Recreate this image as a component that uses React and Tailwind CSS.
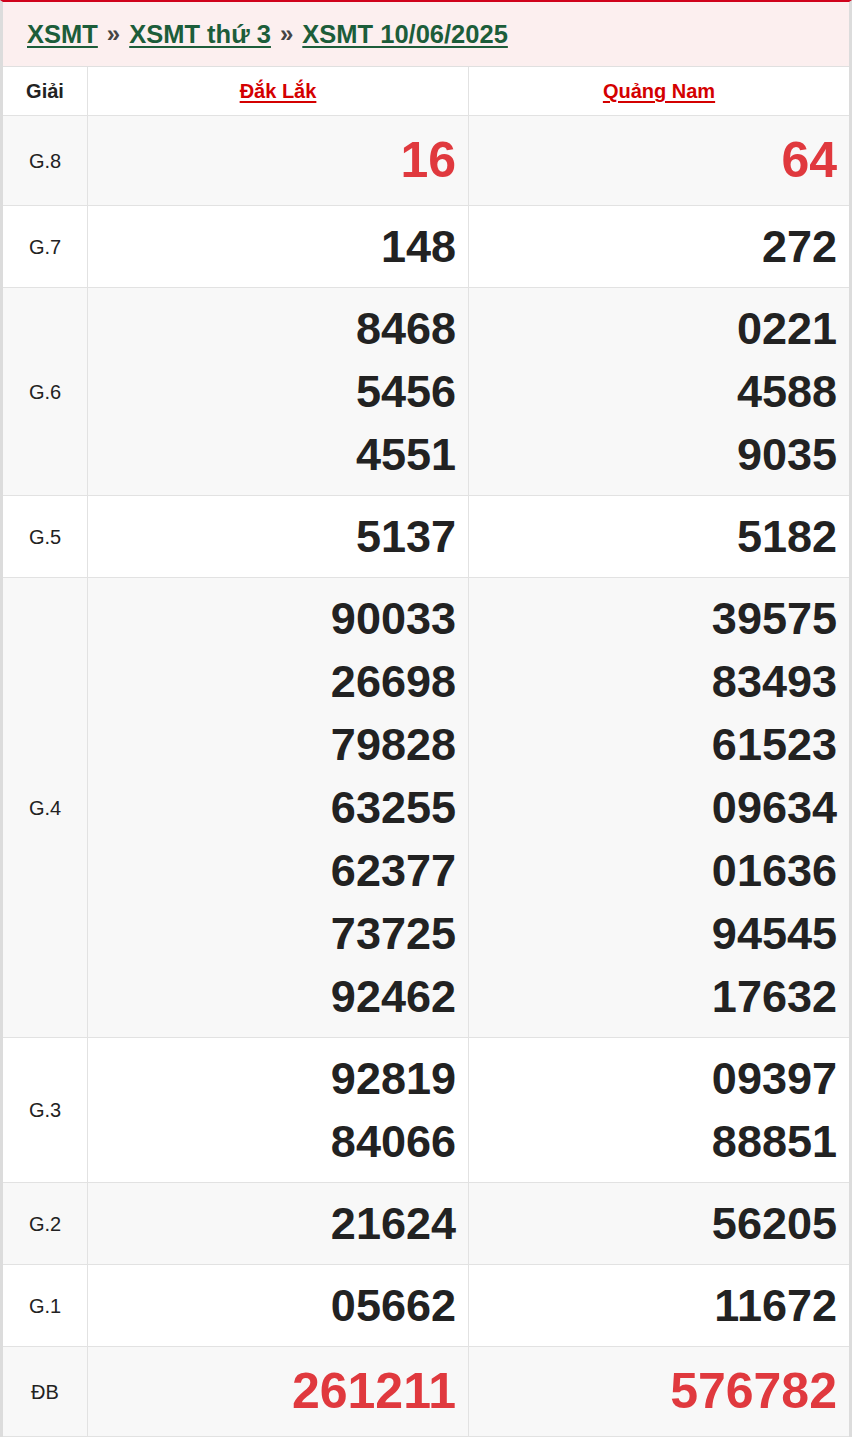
import React from "react";

const rows = [
  { label: "G.8", a: ["16"], b: ["64"], big: true, gray: true },
  { label: "G.7", a: ["148"], b: ["272"] },
  { label: "G.6", a: ["8468", "5456", "4551"], b: ["0221", "4588", "9035"], gray: true },
  { label: "G.5", a: ["5137"], b: ["5182"] },
  {
    label: "G.4",
    a: ["90033", "26698", "79828", "63255", "62377", "73725", "92462"],
    b: ["39575", "83493", "61523", "09634", "01636", "94545", "17632"],
    gray: true,
  },
  { label: "G.3", a: ["92819", "84066"], b: ["09397", "88851"] },
  { label: "G.2", a: ["21624"], b: ["56205"], gray: true },
  { label: "G.1", a: ["05662"], b: ["11672"] },
  { label: "ĐB", a: ["261211"], b: ["576782"], big: true, gray: true },
];

function NumCell({ nums, big, last }) {
  return (
    <div
      className={`py-[9px] pr-3 text-right font-bold ${last ? "" : "border-r border-[#e2e2e2]"} ${
        big ? "text-[50px] leading-[71px] text-[#e0393e]" : "text-[45px] leading-[63px] text-[#222]"
      }`}
    >
      {nums.map((n, i) => (
        <div key={i}>{n}</div>
      ))}
    </div>
  );
}

export default function App() {
  return (
    <div
      className="w-[852px] bg-white border-t-2 border-t-[#d0021b] border-x-[3px] border-x-[#dcdcdc]"
      style={{ fontFamily: '"Liberation Sans", Arial, sans-serif' }}
    >
      <div className="h-[65px] bg-[#fcefef] border-b border-[#e0e0e0] flex items-center pl-6 text-[25.5px] font-bold">
        <a href="#" className="text-[#1c5d3a] underline decoration-2 underline-offset-[3px]">XSMT</a>
        <span className="text-[#444] mx-[9px] text-[24px]">»</span>
        <a href="#" className="text-[#1c5d3a] underline decoration-2 underline-offset-[3px]">XSMT thứ 3</a>
        <span className="text-[#444] mx-[9px] text-[24px]">»</span>
        <a href="#" className="text-[#1c5d3a] underline decoration-2 underline-offset-[3px]">XSMT 10/06/2025</a>
      </div>
      <div className="grid grid-cols-[85px_381px_1fr] h-[49px] border-b border-[#e2e2e2] bg-white">
        <div className="flex items-center justify-center border-r border-[#e2e2e2] text-[20px] font-bold text-[#222]">
          Giải
        </div>
        <div className="flex items-center justify-center border-r border-[#e2e2e2]">
          <a href="#" className="text-[20px] font-bold text-[#d40000] underline decoration-2 underline-offset-[3px]">
            Đắk Lắk
          </a>
        </div>
        <div className="flex items-center justify-center">
          <a href="#" className="text-[20px] font-bold text-[#d40000] underline decoration-2 underline-offset-[3px]">
            Quảng Nam
          </a>
        </div>
      </div>
      {rows.map((r) => (
        <div
          key={r.label}
          className={`grid grid-cols-[85px_381px_1fr] border-b border-[#e2e2e2] ${r.gray ? "bg-[#f8f8f8]" : "bg-white"}`}
        >
          <div className="flex items-center justify-center border-r border-[#e2e2e2] text-[20px] text-[#222]">
            {r.label}
          </div>
          <NumCell nums={r.a} big={r.big} />
          <NumCell nums={r.b} big={r.big} last />
        </div>
      ))}
    </div>
  );
}
